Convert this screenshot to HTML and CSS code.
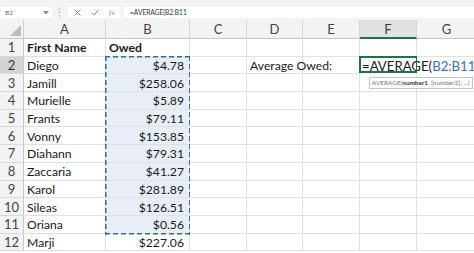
FILE: index.html
```html
<!DOCTYPE html>
<html>
<head>
<meta charset="utf-8">
<link rel="stylesheet" href="styles.css">
</head>
<body>
<div class="app">
  <div class="fbar">
    <div class="namebox"><span>B2</span>
      <svg class="dd" width="6" height="4" viewBox="0 0 6 4"><polygon points="0,0 6,0 3,3.5" fill="#8a8a8a"/></svg>
    </div>
    <svg class="dots" width="3" height="9" viewBox="0 0 3 9"><circle cx="1.5" cy="1" r="0.8" fill="#b0b0b0"/><circle cx="1.5" cy="4.5" r="0.8" fill="#b0b0b0"/><circle cx="1.5" cy="8" r="0.8" fill="#b0b0b0"/></svg>
    <div class="fxbox">
      <svg width="7" height="7" viewBox="0 0 7 7"><path d="M0.5 0.5 L6.5 6.5 M6.5 0.5 L0.5 6.5" stroke="#7a7a7a" stroke-width="0.9" fill="none"/></svg>
      <svg width="8" height="7" viewBox="0 0 8 7"><path d="M0.5 3.8 L2.8 6 L7.5 0.8" stroke="#7a7a7a" stroke-width="1" fill="none"/></svg>
      <span class="fx">fx</span>
    </div>
    <div class="finput">=AVERAGE(B2:B11</div>
  </div>
  <div class="sheet">
    <div class="corner"><svg width="11" height="11" viewBox="0 0 11 11"><polygon points="11,0 11,11 0,11" fill="#bdbdbd"/></svg></div>
    <div class="ch">A</div><div class="ch">B</div><div class="ch">C</div><div class="ch">D</div><div class="ch">E</div><div class="ch cur">F</div><div class="ch">G</div>

    <div class="rh">1</div><div class="c b">First Name</div><div class="c b">Owed</div><div class="c"></div><div class="c"></div><div class="c"></div><div class="c"></div><div class="c"></div>
    <div class="rh cur">2</div><div class="c">Diego</div><div class="c n sel">$4.78</div><div class="c"></div><div class="c lbl">Average Owed:</div><div class="c"></div><div class="c active"><span class="edit">=AVERAGE(<span class="ref">B2:B11</span><span class="caret"></span></span><div class="tip">AVERAGE(<b>number1</b>, [number2], ...)</div></div><div class="c"></div>
    <div class="rh">3</div><div class="c">Jamill</div><div class="c n sel">$258.06</div><div class="c"></div><div class="c"></div><div class="c"></div><div class="c"></div><div class="c"></div>
    <div class="rh">4</div><div class="c">Murielle</div><div class="c n sel">$5.89</div><div class="c"></div><div class="c"></div><div class="c"></div><div class="c"></div><div class="c"></div>
    <div class="rh">5</div><div class="c">Frants</div><div class="c n sel">$79.11</div><div class="c"></div><div class="c"></div><div class="c"></div><div class="c"></div><div class="c"></div>
    <div class="rh">6</div><div class="c">Vonny</div><div class="c n sel">$153.85</div><div class="c"></div><div class="c"></div><div class="c"></div><div class="c"></div><div class="c"></div>
    <div class="rh">7</div><div class="c">Diahann</div><div class="c n sel">$79.31</div><div class="c"></div><div class="c"></div><div class="c"></div><div class="c"></div><div class="c"></div>
    <div class="rh">8</div><div class="c">Zaccaria</div><div class="c n sel">$41.27</div><div class="c"></div><div class="c"></div><div class="c"></div><div class="c"></div><div class="c"></div>
    <div class="rh">9</div><div class="c">Karol</div><div class="c n sel">$281.89</div><div class="c"></div><div class="c"></div><div class="c"></div><div class="c"></div><div class="c"></div>
    <div class="rh">10</div><div class="c">Sileas</div><div class="c n sel">$126.51</div><div class="c"></div><div class="c"></div><div class="c"></div><div class="c"></div><div class="c"></div>
    <div class="rh">11</div><div class="c">Oriana</div><div class="c n sel">$0.56</div><div class="c"></div><div class="c"></div><div class="c"></div><div class="c"></div><div class="c"></div>
    <div class="rh">12</div><div class="c">Marji</div><div class="c n">$227.06</div><div class="c"></div><div class="c"></div><div class="c"></div><div class="c"></div><div class="c"></div>

    <div class="marquee"></div>
  </div>
</div>
</body>
</html>
```
FILE: styles.css
```css
html, body {
  margin: 0;
  padding: 0;
  background: #fff;
}
.app {
  width: 474px;
  height: 253px;
  overflow: hidden;
  font-family: Lato, "Open Sans", sans-serif;
  color: #1a1a1a;
}
.fbar {
  height: 20px;
  box-sizing: border-box;
  background: #f3f3f3;
  display: flex;
  align-items: center;
  padding: 7px 0 2px 1px;
  gap: 0;
}
.namebox {
  width: 51px;
  height: 11px;
  background: #fff;
  display: flex;
  align-items: center;
  justify-content: space-between;
  padding: 0 3px 0 4px;
  box-sizing: border-box;
  font-size: 6.5px;
  color: #666;
}
.dots {
  margin: 0 7px 0 6px;
}
.fxbox {
  width: 52px;
  height: 11px;
  background: #fff;
  display: flex;
  align-items: center;
  gap: 10px;
  padding-left: 6px;
  box-sizing: border-box;
}
.fx {
  font-family: "DejaVu Serif", serif;
  font-style: italic;
  font-size: 6px;
  color: #7a7a7a;
}
.finput {
  flex: 1;
  margin-left: 4px;
  height: 11px;
  background: #fff;
  font-size: 6.6px;
  line-height: 11px;
  padding-left: 6px;
  color: #333;
}
.sheet {
  position: relative;
  display: grid;
  grid-template-columns: 24px 82px 84px 57px 56px 57px 57px 60px;
  grid-template-rows: 19px repeat(12, 17.7px);
  font-size: 12.2px;
}
.corner, .ch, .rh {
  background: #f3f3f3;
  color: #444;
  box-sizing: border-box;
  display: flex;
  align-items: center;
  justify-content: center;
}
.corner {
  align-items: flex-end;
  justify-content: flex-end;
  padding: 0 2px 2px 0;
  border-right: 1px solid #d0d0d0;
  border-bottom: 1px solid #c8c8c8;
}
.ch {
  border-right: 1px solid #d6d6d6;
  border-bottom: 1px solid #c8c8c8;
  font-size: 13px;
}
.ch.cur {
  background: #e1e1e1;
  border-bottom: 2px solid #217346;
  color: #3c3c3c;
}
.rh {
  border-right: 1px solid #c8c8c8;
  border-bottom: 1px solid #dadada;
  font-size: 13px;
}
.rh.cur {
  background: #d4d4d4;
  color: #333;
}
.c {
  box-sizing: border-box;
  border-right: 1px solid #e1e1e1;
  border-bottom: 1px solid #e1e1e1;
  display: flex;
  align-items: center;
  padding: 1px 3px 0 3px;
  white-space: nowrap;
}
.c.b {
  font-weight: 700;
}
.c.n {
  justify-content: flex-end;
  padding-right: 5px;
}
.c.sel {
  background: #e7eef7;
}
.c.lbl {
  overflow: visible;
}
.c.active {
  position: relative;
  z-index: 2;
  overflow: visible;
  padding-left: 2px;
}
.edit {
  background: #fff;
  display: inline-flex;
  align-items: center;
  font-size: 13.2px;
  padding-right: 1px;
}
.ref {
  color: #3d6fc2;
}
.caret {
  display: inline-block;
  width: 1px;
  height: 14px;
  background: #111;
  margin-left: 1px;
}
.c.active::after {
  content: "";
  position: absolute;
  left: -1px;
  top: -1px;
  right: -1px;
  bottom: 0;
  border: 2px solid #217346;
  border-right-width: 1.5px;
}
.tip {
  position: absolute;
  left: 9px;
  top: 20px;
  background: #fff;
  border: 1px solid #c4c4c4;
  font-size: 6.4px;
  color: #777;
  padding: 1px 2px;
  line-height: 8px;
  white-space: nowrap;
  z-index: 3;
}
.tip b {
  color: #333;
}
.marquee {
  position: absolute;
  grid-column: 3 / 4;
  grid-row: 3 / 13;
  left: -1px;
  top: -1px;
  right: 0;
  bottom: -1px;
  background:
    repeating-linear-gradient(90deg, #3b6b8e 0 5px, transparent 5px 8px) left top / 100% 1.5px no-repeat,
    repeating-linear-gradient(90deg, #3b6b8e 0 5px, transparent 5px 8px) left bottom / 100% 1.5px no-repeat,
    repeating-linear-gradient(180deg, #3b6b8e 0 5px, transparent 5px 8px) left top / 1.5px 100% no-repeat,
    repeating-linear-gradient(180deg, #3b6b8e 0 5px, transparent 5px 8px) right top / 1.5px 100% no-repeat;
}
```
